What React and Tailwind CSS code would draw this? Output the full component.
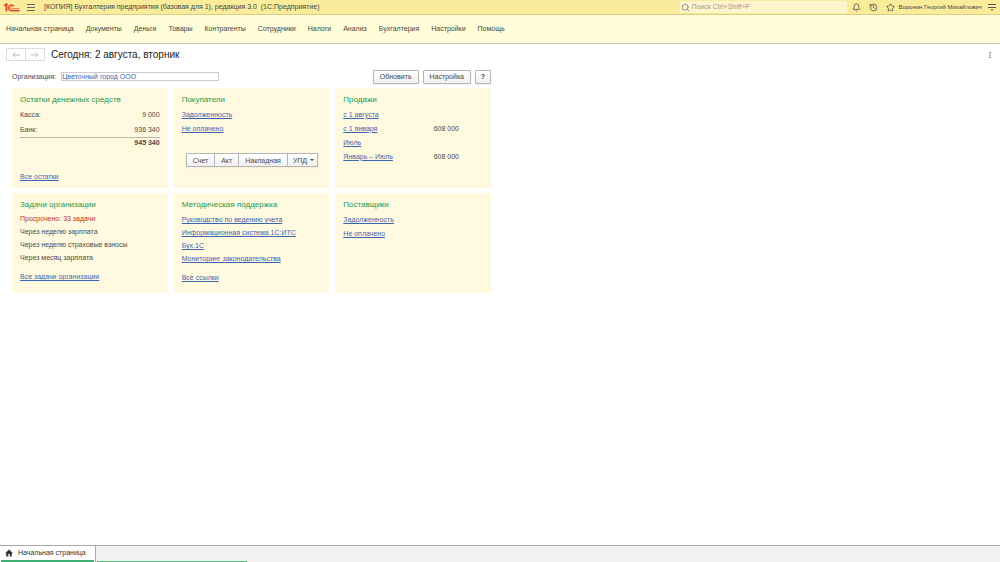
import { Bell, History, Star, Search } from 'lucide-react'

const sections = [
  'Начальная страница',
  'Документы',
  'Деньги',
  'Товары',
  'Контрагенты',
  'Сотрудники',
  'Налоги',
  'Анализ',
  'Бухгалтерия',
  'Настройки',
  'Помощь',
]

const sales = [
  { period: 'с 1 августа' },
  { period: 'с 1 января', sum: '608 000' },
  { period: 'Июль' },
  { period: 'Январь – Июль', sum: '608 000' },
]

const tasks = ['Через неделю зарплата', 'Через неделю страховые взносы', 'Через месяц зарплата']

const supportLinks = [
  'Руководство по ведению учета',
  'Информационная система 1С:ИТС',
  'Бух.1С',
  'Мониторинг законодательства',
]

function Logo() {
  return (
    <svg viewBox="0 0 32 18" className="h-[9px] w-4" fill="none" stroke="#dc4a34" aria-label="1С" role="img">
      <path d="M0.500 5.500L5 2.500V16.500" strokeWidth="4" />
      <path d="M20 6.500A5.800 5.800 0 1 0 15 15.500H31" strokeWidth="3" />
      <path d="M17 8A2.200 2.200 0 1 0 15 11.500H31" strokeWidth="1.600" />
    </svg>
  )
}

function Panel({ title, children }) {
  return (
    <section className="flex min-h-[100px] flex-col bg-[#fff9e0] px-2 py-[7px]">
      <h2 className="mb-[3px] text-[8px] leading-[9px] text-[#1c9a4c]">{title}</h2>
      {children}
    </section>
  )
}

function TextLink({ children }) {
  return (
    <a href="#" className="text-[#3a66b0] underline">
      {children}
    </a>
  )
}

function Button({ children, label, className = 'px-[6px]' }) {
  return (
    <button
      type="button"
      aria-label={label}
      className={`h-[14px] rounded-[1px] border border-[#b5b5b5] bg-linear-to-b from-white to-[#f0f0f0] leading-3 text-[#444] shadow-xs ${className}`}
    >
      {children}
    </button>
  )
}

function TopBar() {
  return (
    <header className="flex h-[15px] items-center border-b border-[#d9cc84] bg-[#fbec9c] px-1 text-[7px] text-[#444]">
      <Logo />
      <button type="button" aria-label="Меню" className="ml-[7px]">
        <svg viewBox="0 0 8 8" className="size-2" stroke="#666" strokeWidth="1">
          <path d="M0 1.500h8M0 4.500h8M0 7.500h8" />
        </svg>
      </button>
      <h1 className="ml-[9px]">
        [КОПИЯ] Бухгалтерия предприятия (базовая для 1), редакция 3.0&nbsp; (1С:Предприятие)
      </h1>
      <label className="ml-auto flex h-3 w-[167px] items-center bg-[#fff5cc] pl-px">
        <Search className="size-[9px] text-[#777]" strokeWidth={2} aria-hidden="true" />
        <input
          type="search"
          aria-label="Поиск"
          placeholder="Поиск Ctrl+Shift+F"
          className="min-w-0 flex-1 pl-px text-[7px] outline-none placeholder:text-[#999]"
        />
      </label>
      <div className="ml-[5px] flex items-center gap-2">
        <button type="button" aria-label="Уведомления">
          <Bell className="size-[9px]" />
        </button>
        <button type="button" aria-label="История">
          <History className="size-[9px]" />
        </button>
        <button type="button" aria-label="Избранное">
          <Star className="size-[9px]" />
        </button>
      </div>
      <span className="ml-[3px] text-[6px]">Воронин Георгий Михайлович</span>
      <button type="button" aria-label="Сервис" className="ml-[6px]">
        <svg viewBox="0 0 8 8" className="size-2" stroke="#555" strokeWidth="1">
          <path d="M0 1.500h8M0 4.500h8" />
          <path d="M2.500 6.200h3L4 7.800z" fill="#555" stroke="none" />
        </svg>
      </button>
    </header>
  )
}

function SectionsBar() {
  return (
    <nav className="flex h-[29px] items-center gap-3 border-b border-[#c4c4b0] bg-[#fffed8] px-[6px] text-[7px] text-[#444]">
      {sections.map(name => (
        <a key={name} href="#">
          {name}
        </a>
      ))}
    </nav>
  )
}

function PageHeader() {
  return (
    <div className="flex h-[21px] items-center px-[6px]">
      <div className="flex h-[13px] w-[39px] divide-x divide-[#dcdcdc] border border-[#dcdcdc]">
        <button type="button" aria-label="Назад" className="flex flex-1 items-center justify-center">
          <svg viewBox="0 0 8 6" className="h-[6px] w-2" fill="none" stroke="#bbb">
            <path d="M8 3H1M3.500 .5L1 3l2.500 2.500" />
          </svg>
        </button>
        <button type="button" aria-label="Вперед" className="flex flex-1 items-center justify-center">
          <svg viewBox="0 0 8 6" className="h-[6px] w-2" fill="none" stroke="#bbb">
            <path d="M0 3h7M4.500 .5L7 3 4.500 5.500" />
          </svg>
        </button>
      </div>
      <h2 className="ml-[6px] text-[10px] text-[#222]">Сегодня: 2 августа, вторник</h2>
      <button type="button" aria-label="Еще" className="ml-auto">
        <svg viewBox="0 0 8 8" className="size-2" fill="#444">
          <path d="M3.400 1h1.200v1.200H3.400zM3.400 3.400h1.200v1.200H3.400zM3.400 5.800h1.200v1.200H3.400z" />
        </svg>
      </button>
    </div>
  )
}

function Dashboard() {
  return (
    <div className="ml-3 max-w-[479px] text-[7px] leading-[9px] text-[#4a4a4a]">
      <div className="flex h-[23px] items-center gap-[5px]">
        <label htmlFor="org">Организация:</label>
        <input
          id="org"
          defaultValue="Цветочный город ООО"
          className="h-[9px] w-[158px] border border-[#ccc] text-[#3a66b0] underline outline-none"
        />
        <div className="ml-auto flex gap-1">
          <Button>Обновить</Button>
          <Button>Настройка</Button>
          <Button label="Справка" className="w-4 font-bold">
            ?
          </Button>
        </div>
      </div>

      <div className="grid grid-cols-3 gap-x-[6px] gap-y-[5px]">
        <Panel title="Остатки денежных средств">
          <table className="w-full">
            <tbody>
              <tr>
                <th className="h-[15px] text-left font-normal">Касса:</th>
                <td className="text-right">9 000</td>
              </tr>
              <tr>
                <th className="h-[15px] text-left font-normal">Банк:</th>
                <td className="text-right">936 340</td>
              </tr>
              <tr className="border-t border-[#b8b8a8]">
                <td colSpan={2} className="text-right font-bold">
                  945 340
                </td>
              </tr>
            </tbody>
          </table>
          <div className="mt-auto">
            <TextLink>Все остатки</TextLink>
          </div>
        </Panel>

        <Panel title="Покупатели">
          <ul className="space-y-[5px] pt-[3px]">
            <li>
              <TextLink>Задолженность</TextLink>
            </li>
            <li>
              <TextLink>Не оплачено</TextLink>
            </li>
          </ul>
          <div className="mt-5 ml-1 flex h-[14px] w-fit divide-x divide-[#b5b5b5] border border-[#b5b5b5] bg-linear-to-b from-white to-[#f0f0f0] shadow-xs">
            <button type="button" className="px-[6px]">Счет</button>
            <button type="button" className="px-[6px]">Акт</button>
            <button type="button" className="px-[6px]">Накладная</button>
            <button type="button" className="flex items-center gap-[3px] pr-[3px] pl-[5px]">
              УПД
              <svg viewBox="0 0 4 4" className="size-1" fill="#444">
                <path d="M0 1h4L2 3z" />
              </svg>
            </button>
          </div>
        </Panel>

        <Panel title="Продажи">
          <table className="w-full">
            <tbody>
              {sales.map(row => (
                <tr key={row.period}>
                  <th className="h-[14px] text-left font-normal">
                    <TextLink>{row.period}</TextLink>
                  </th>
                  <td className="pr-6 text-right">{row.sum}</td>
                </tr>
              ))}
            </tbody>
          </table>
        </Panel>

        <Panel title="Задачи организации">
          <p className="leading-[13px] text-[#b8322a]">Просрочено: 33 задачи</p>
          <ul className="leading-[13px]">
            {tasks.map(task => (
              <li key={task}>{task}</li>
            ))}
          </ul>
          <div className="mt-2">
            <TextLink>Все задачи организации</TextLink>
          </div>
        </Panel>

        <Panel title="Методическая поддержка">
          <ul className="pt-px leading-[13px]">
            {supportLinks.map(link => (
              <li key={link}>
                <TextLink>{link}</TextLink>
              </li>
            ))}
          </ul>
          <div className="mt-2">
            <TextLink>Все ссылки</TextLink>
          </div>
        </Panel>

        <Panel title="Поставщики">
          <ul className="space-y-[5px] pt-[3px]">
            <li>
              <TextLink>Задолженность</TextLink>
            </li>
            <li>
              <TextLink>Не оплачено</TextLink>
            </li>
          </ul>
        </Panel>
      </div>
    </div>
  )
}

function TabBar() {
  return (
    <footer className="flex h-[17px] border-t border-[#a8a8a8] bg-[#f1f1f1] text-[7px] text-[#333]">
      <div className="flex border-r border-[#a8a8a8] bg-white px-px">
        <button type="button" className="flex items-center gap-[5px] border-b-2 border-[#3fb073] pr-2 pl-1">
          <svg viewBox="0 0 16 16" className="size-2" fill="#333">
            <path d="M8 1L0 8.500h2.500V15h4v-5h3v5h4V8.500H16z" />
          </svg>
          Начальная страница
        </button>
      </div>
      <div className="ml-px h-px w-[150px] self-end bg-[#4fc088]" />
    </footer>
  )
}

export default function App() {
  return (
    <div className="flex min-h-screen flex-col bg-white font-['Liberation_Sans',Arial,sans-serif]">
      <TopBar />
      <SectionsBar />
      <main className="flex-1">
        <PageHeader />
        <Dashboard />
      </main>
      <TabBar />
    </div>
  )
}
